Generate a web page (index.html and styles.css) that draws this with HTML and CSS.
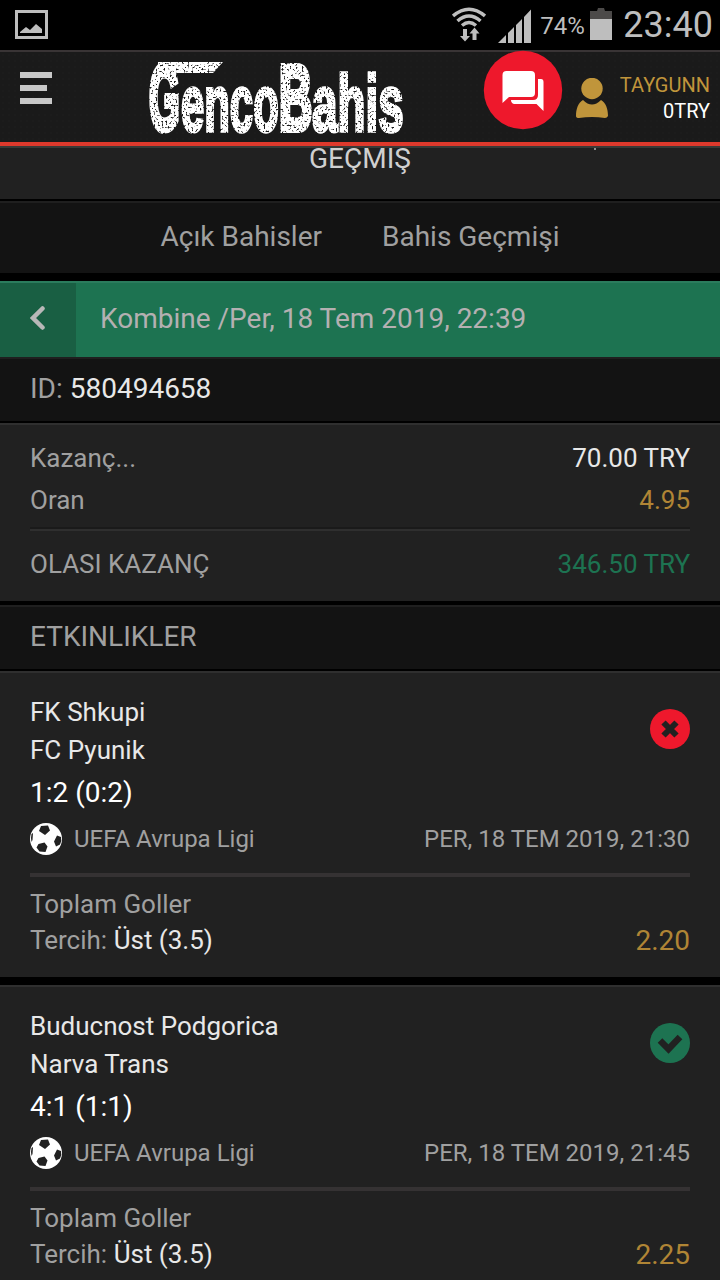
FILE: index.html
```html
<!DOCTYPE html>
<html lang="tr">
<head>
    <meta charset="UTF-8">
    <meta name="viewport" content="width=device-width, initial-scale=1.0">
    <title>GencoBahis</title>
    <link rel="stylesheet" href="styles.css">
</head>
<body>
    <div class="status-bar">
        <svg class="status-picture" width="34" height="30" viewBox="0 0 34 30">
            <path d="M1.5 1.5h30v26h-30z" fill="none" stroke="#bebebe" stroke-width="3"/>
            <path d="M5 22l6-5 4 3 6-6 6 5v4H5z" fill="#bebebe"/>
        </svg>
        <div class="status-right">
            <svg class="wifi" width="34" height="36" viewBox="0 0 34 36" fill="none" stroke="#bebebe" stroke-width="3.500">
                <path d="M1 9Q17-4.500 33 9M5.500 14Q17 4 28.500 14M10 18.500Q17 12.500 24 18.500"/>
                <path d="M13 22v8M22.500 33v-8" stroke-width="4"/>
                <path d="M8 29h10l-5 5.500zM17.500 26.500h10l-5-6z" fill="#bebebe" stroke="none"/>
            </svg>
            <svg class="signal" width="34" height="34" viewBox="0 0 34 34" fill="#bebebe">
                <path d="M0 34l8-8v8zM10 24l6-6v16h-6zM18 16l6-6v24h-6zM26 8l7-7.500V34h-7z"/>
            </svg>
            <span class="percent">74%</span>
            <svg class="battery" width="22" height="32" viewBox="0 0 22 32">
                <path d="M0 3h7l1-3h6l1 3h7v8H0z" fill="#4c4a49"/>
                <path d="M0 11h22v21H0z" fill="#bebebe"/>
            </svg>
            <span class="clock">23:40</span>
        </div>
    </div>

    <header>
        <div class="menu-btn"><span></span><span class="short"></span><span></span></div>
        <svg class="logo" width="262" height="84" viewBox="0 0 262 84">
            <defs>
                <filter id="grunge" x="0" y="0" width="1" height="1" color-interpolation-filters="sRGB">
                    <feTurbulence type="fractalNoise" baseFrequency="0.5" numOctaves="2" seed="8" result="noise"/>
                    <feColorMatrix in="noise" type="matrix" values="0 0 0 0 0  0 0 0 0 0  0 0 0 0 0  -7 0 0 0 5" result="holes"/>
                    <feComposite in="SourceGraphic" in2="holes" operator="in"/>
                </filter>
            </defs>
            <g class="logo-text" filter="url(#grunge)">
                <path class="swash" d="M12 5h65L67 16H12z"/>
                <text class="capital" transform="translate(3 72.500) scale(.43 1)">G</text>
                <text class="small" transform="translate(35 74) scale(.53 1)">enco</text>
                <text class="capital" transform="translate(133 72.500) scale(.5 1)">B</text>
                <text class="small" transform="translate(166 74) scale(.58 1)">ahis</text>
            </g>
        </svg>
        <svg class="chat" width="80" height="80" viewBox="0 0 80 80">
            <circle cx="40" cy="40" r="39.200" fill="#ee182c"/>
            <path d="M21 21h27q4 0 4 4v18q0 4-4 4H26l-6.500 6V25q0-4 4-4z" fill="#fff"/>
            <path d="M55 29h3q2.500 0 2.500 3v29l-7-7H31q-3-1-3-4h22q5 0 5-5z" fill="#fff"/>
        </svg>
        <svg class="user-icon" width="32" height="40" viewBox="0 0 32 40" fill="#c0953b">
            <circle cx="16" cy="10.500" r="10.700"/>
            <path d="M7 22q9 9 18 0c5 3 7 9 7 16q-1 2-3 2-13-2-26 0-3 0-3-2c0-7 2-13 7-16z"/>
        </svg>
        <div class="account">
            <div class="user-name">TAYGUNN</div>
            <div class="balance">0TRY</div>
        </div>
    </header>

    <main>
        <div class="page-title">GEÇMIŞ<i class="tick"></i></div>
        <nav>
            <a>Açık Bahisler</a>
            <a>Bahis Geçmişi</a>
        </nav>

        <div class="bet-head">
            <div class="back">
                <svg width="16" height="26" viewBox="0 0 16 26"><path d="M12.500 3.500L3 13l9.500 9.500" fill="none" stroke="#b8b8b8" stroke-width="4.500" stroke-linecap="round"/></svg>
            </div>
            <span>Kombine /Per, 18 Tem 2019, 22:39</span>
        </div>
        <div class="bar bet-id">ID: <b>580494658</b></div>

        <div class="summary">
            <div class="row"><span>Kazanç...</span><span class="white">70.00 TRY</span></div>
            <div class="row"><span>Oran</span><span class="gold">4.95</span></div>
            <div class="row total"><span>OLASI KAZANÇ</span><span class="green">346.50 TRY</span></div>
        </div>

        <div class="bar events-title">ETKINLIKLER</div>

        <div class="event">
            <div class="match">
                <div class="teams">
                    <div>FK Shkupi</div>
                    <div>FC Pyunik</div>
                </div>
                <svg class="result" width="40" height="40" viewBox="0 0 40 40">
                    <circle cx="20" cy="20" r="20" fill="#ee182c"/>
                    <path d="M13.500 13.500l13 13M26.500 13.500l-13 13" stroke="#212121" stroke-width="6"/>
                </svg>
            </div>
            <div class="score">1:2 (0:2)</div>
            <div class="league">
                <svg class="ball" width="32" height="32" viewBox="0 0 32 32">
                    <circle cx="16" cy="16" r="16" fill="#fff"/>
                    <path d="M11 3l7-.5 2 5-5 4.500-6-4zM8.500 21l6-1.500 3 4-2 5.500-6-.5-3-4zM27 12.500l4 1.500q1 4-1 7.500l-4 2-2-5zM1.500 11L3 10l-.5 7-1 2q-1-4 0-8z" fill="#212121"/>
                </svg>
                <span class="league-name">UEFA Avrupa Ligi</span>
                <span class="date">PER, 18 TEM 2019, 21:30</span>
            </div>
            <div class="pick">
                <div>Toplam Goller</div>
                <div class="pick-row"><span>Tercih: <b>Üst (3.5)</b></span><span class="odd">2.20</span></div>
            </div>
        </div>

        <div class="event">
            <div class="match">
                <div class="teams">
                    <div>Buducnost Podgorica</div>
                    <div>Narva Trans</div>
                </div>
                <svg class="result" width="40" height="40" viewBox="0 0 40 40">
                    <circle cx="20" cy="20" r="20" fill="#1d7351"/>
                    <path d="M10 17.500l8.500 8.500L30 14" fill="none" stroke="#212121" stroke-width="6.500"/>
                </svg>
            </div>
            <div class="score">4:1 (1:1)</div>
            <div class="league">
                <svg class="ball" width="32" height="32" viewBox="0 0 32 32">
                    <circle cx="16" cy="16" r="16" fill="#fff"/>
                    <path d="M11 3l7-.5 2 5-5 4.500-6-4zM8.500 21l6-1.500 3 4-2 5.500-6-.5-3-4zM27 12.500l4 1.500q1 4-1 7.500l-4 2-2-5zM1.500 11L3 10l-.5 7-1 2q-1-4 0-8z" fill="#212121"/>
                </svg>
                <span class="league-name">UEFA Avrupa Ligi</span>
                <span class="date">PER, 18 TEM 2019, 21:45</span>
            </div>
            <div class="pick">
                <div>Toplam Goller</div>
                <div class="pick-row"><span>Tercih: <b>Üst (3.5)</b></span><span class="odd">2.25</span></div>
            </div>
        </div>
    </main>
</body>
</html>
```

FILE: styles.css
```css
* {
    margin: 0;
    padding: 0;
    box-sizing: border-box;
}

body {
    width: 720px;
    height: 1280px;
    overflow: hidden;
    background-color: #000;
    color: #a0a0a0;
    font-family: Roboto, "Liberation Sans", sans-serif;
    font-size: 26px;
}

svg {
    display: block;
    flex-shrink: 0;
}

b {
    font-weight: 400;
    color: #e8e8e8;
}

/* Status bar */
.status-bar {
    display: flex;
    justify-content: space-between;
    height: 50px;
    padding: 0 7px 0 15px;
    color: #bebebe;
}

.status-picture {
    margin-top: 10px;
}

.status-right {
    display: flex;
    align-items: flex-start;
}

.wifi {
    margin-top: 7px;
    margin-right: 12px;
}

.signal {
    margin-top: 9px;
    margin-right: 8px;
}

.percent {
    width: 50px;
    font-size: 24px;
    line-height: 52px;
}

.battery {
    margin-top: 8px;
    margin-right: 11px;
}

.clock {
    font-size: 36px;
    line-height: 50px;
}

/* Header */
header {
    display: flex;
    align-items: flex-start;
    height: 98px;
    padding-right: 10px;
    border-top: 2px solid #393435;
    border-bottom: 2px solid #3a3a38;
    box-shadow: inset 0 -4px #de392c;
    background: radial-gradient(circle, #1c1c1c 1px, #1a1a1a 1.5px) 0 0 / 6px 6px;
}

.menu-btn {
    display: flex;
    flex-direction: column;
    gap: 7px;
    width: 32px;
    margin: 20px 94px 0 20px;
}

.menu-btn span {
    height: 6px;
    background-color: #c8c8c8;
}

.menu-btn .short {
    width: 27px;
}

.logo {
    margin-top: 5px;
    overflow: visible;
}

.logo-text {
    fill: #fff;
    stroke: #fff;
    font-family: "Liberation Sans", sans-serif;
    font-weight: 700;
}

.logo-text .swash {
    stroke: none;
}

.capital {
    font-size: 92px;
    stroke-width: 6px;
}

.small {
    font-size: 79px;
    stroke-width: 3.5px;
}

.chat {
    margin-left: 74.5px;
    margin-top: -2px;
}

.user-icon {
    margin-left: 13.5px;
    margin-top: 26px;
}

.account {
    flex: 1;
    padding-top: 20px;
    font-size: 20px;
    line-height: 26px;
    text-align: right;
    white-space: nowrap;
}

.user-name {
    color: #c0953b;
}

.balance {
    color: #fff;
}

/* Title and tabs */
.page-title {
    position: relative;
    height: 51px;
    background-color: #212121;
    color: #d0d0d0;
    font-size: 28px;
    line-height: 21px;
    text-align: center;
}

.tick {
    position: absolute;
    left: 594px;
    top: 0;
    width: 2px;
    height: 2px;
    background-color: #909090;
}

nav {
    display: flex;
    justify-content: center;
    gap: 60px;
    height: 72px;
    margin-top: 2px;
    border-top: 2px solid #1f1f1f;
    background-color: #131313;
    font-size: 28px;
    line-height: 67px;
}

/* Bet header */
.bet-head {
    display: flex;
    height: 76px;
    margin-top: 8px;
    border-top: 2px solid #2b7c5d;
    background-color: #1d7351;
    color: #b4b0b1;
    font-size: 28px;
    line-height: 71px;
}

.back {
    display: flex;
    justify-content: center;
    width: 76px;
    margin-right: 24px;
    padding-top: 22px;
    background-color: #195f43;
}

.bar {
    height: 64px;
    padding: 0 30px;
    border-top: 2px solid #1f1f1f;
    background-color: #131313;
    font-size: 28px;
    line-height: 59px;
}

/* Summary */
.summary {
    height: 178px;
    margin: 2px 0 4px;
    padding: 12px 30px 0;
    border-top: 2px solid #2f2f2f;
    background-color: #212121;
}

.row {
    display: flex;
    justify-content: space-between;
    line-height: 42px;
}

.total {
    margin-top: 6px;
    padding-top: 14px;
    border-top: 2px solid #1a1a1a;
    box-shadow: inset 0 2px #2f2f2f;
}

.white {
    color: #e8e8e8;
}

.gold {
    color: #b08535;
}

.green {
    color: #1d7351;
}

/* Events */
.event {
    height: 306px;
    margin-bottom: 8px;
    padding: 20px 30px 0;
    border-top: 2px solid #2f2f2f;
    background-color: #212121;
}

.events-title {
    margin-bottom: 2px;
}

.match {
    display: flex;
    justify-content: space-between;
    height: 76px;
    color: #e8e8e8;
    line-height: 38px;
}

.result {
    margin-top: 16px;
}

.score {
    height: 47px;
    color: #fff;
    font-size: 28px;
    line-height: 47px;
}

.league {
    display: flex;
    align-items: center;
    height: 46px;
    font-size: 24px;
}

.league-name {
    margin-left: 12px;
}

.date {
    margin-left: auto;
}

.pick {
    margin-top: 11px;
    padding-top: 9px;
    border-top: 4px solid #353233;
    line-height: 36px;
}

.pick-row {
    display: flex;
    justify-content: space-between;
}

.odd {
    color: #b08535;
    font-size: 28px;
    line-height: 38px;
}
```
